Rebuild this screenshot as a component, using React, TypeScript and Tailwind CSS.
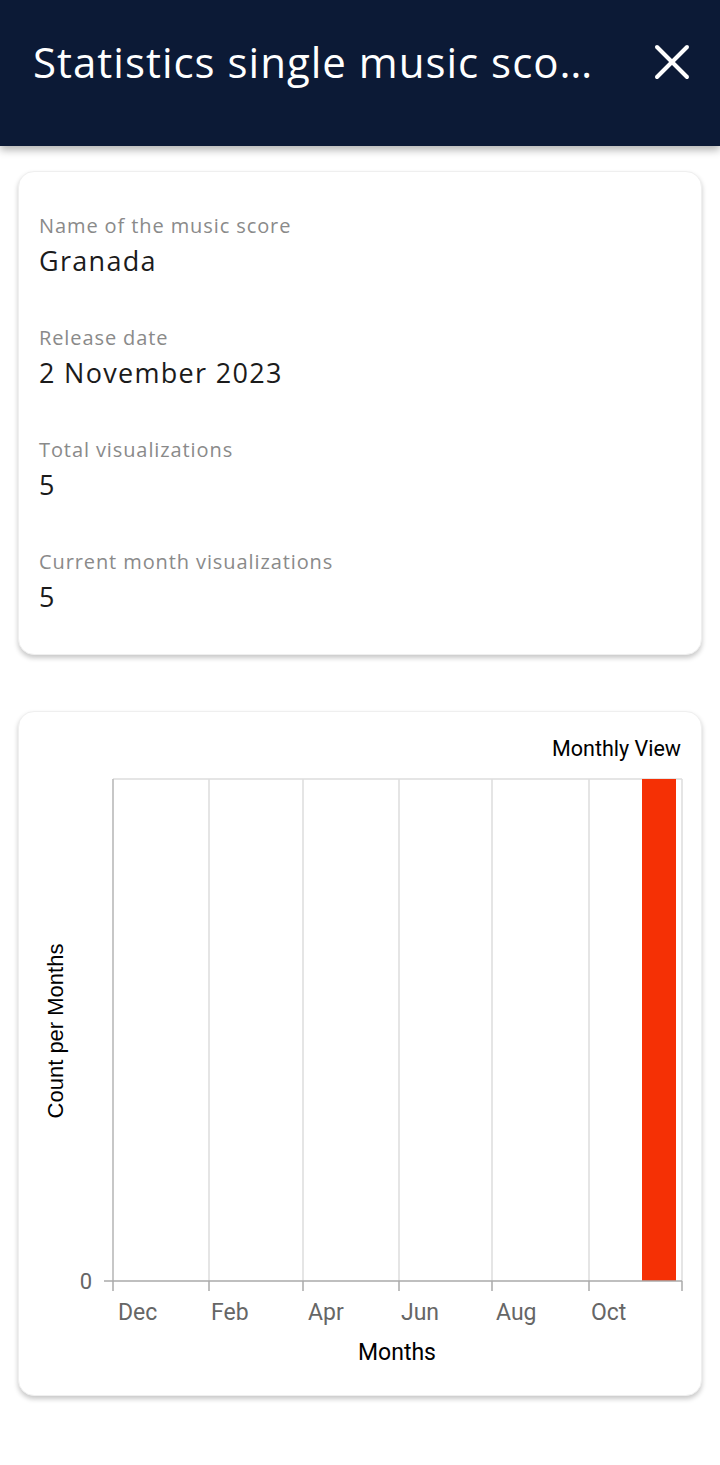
import { X } from "lucide-react";

const stats = [
  { label: "Name of the music score", value: "Granada" },
  { label: "Release date", value: "2 November 2023" },
  { label: "Total visualizations", value: "5" },
  { label: "Current month visualizations", value: "5" },
];

const grid = [94, 190, 284, 380, 473, 570, 663];
const months = [
  { name: "Dec", x: 99 },
  { name: "Feb", x: 192 },
  { name: "Apr", x: 289 },
  { name: "Jun", x: 382 },
  { name: "Aug", x: 477 },
  { name: "Oct", x: 572 },
];

function MonthlyChart() {
  return (
    <svg width="684" height="570" className="block" style={{ fontFamily: "Roboto, sans-serif" }}>
      {grid.map((x) => (
        <line key={x} x1={x} y1={18} x2={x} y2={520} stroke="#dcdcdc" strokeWidth="1.5" />
      ))}
      <line x1={94} y1={18} x2={663} y2={18} stroke="#dcdcdc" strokeWidth="1.5" />
      <line x1={94} y1={18} x2={94} y2={520} stroke="#bdbdbd" strokeWidth="1.5" />
      <rect x={623} y={18} width={34} height={502} fill="#f53005" />
      <line x1={85} y1={520} x2={663} y2={520} stroke="#aaaaaa" strokeWidth="1.5" />
      {grid.map((x) => (
        <line key={"t" + x} x1={x} y1={520} x2={x} y2={530} stroke="#aaaaaa" strokeWidth="1.5" />
      ))}
      <text x={73} y={528} fontSize="22" fill="#666" textAnchor="end">
        0
      </text>
      {months.map((m) => (
        <text key={m.name} x={m.x} y={559} fontSize="23" fill="#666">
          {m.name}
        </text>
      ))}
      <text
        x={36}
        y={270}
        fontSize="22"
        fill="#000"
        textAnchor="middle"
        dominantBaseline="central"
        transform="rotate(-90 36 270)"
        style={{ fontFamily: "'Liberation Sans', Arial, sans-serif" }}
      >
        Count per Months
      </text>
    </svg>
  );
}

export default function App() {
  return (
    <div className="min-h-screen w-[720px] bg-white font-['Open_Sans',sans-serif]">
      <div className="h-[146px] bg-[#0c1a36] pt-[33px] pl-[33px] pr-[18px] flex items-start justify-between shadow-[0_4px_8px_rgba(0,0,0,0.3)] relative">
        <h1 className="text-white text-[42px] leading-[58px] font-medium tracking-[1px] whitespace-nowrap">
          Statistics single music sco…
        </h1>
        <X className="text-white -mt-[1px]" size={60} strokeWidth={1.6} />
      </div>

      <div className="px-[18px] pt-[25px] flex flex-col gap-[56px]">
        <div className="rounded-[16px] bg-white border border-[#efefef] shadow-[0_3px_5px_rgba(0,0,0,0.22)] px-[20px] pt-[40px] pb-[39px] flex flex-col gap-[45px]">
          {stats.map((s) => (
            <div key={s.label} className="flex flex-col gap-[3px]">
              <span className="text-[20px] leading-[28px] tracking-[0.9px] text-[#8a8a8a]">{s.label}</span>
              <span className="text-[27px] leading-[36px] tracking-[1.3px] text-[#1b1b1b] font-medium">
                {s.value}
              </span>
            </div>
          ))}
        </div>

        <div className="rounded-[16px] bg-white border border-[#efefef] shadow-[0_3px_5px_rgba(0,0,0,0.22)] pt-[25px] pb-[27px] flex flex-col">
          <div className="text-right pr-[20px] text-[21.5px] leading-[24px] text-black font-['Roboto',sans-serif]">
            Monthly View
          </div>
          <MonthlyChart />
          <div className="text-center pl-[74px] mt-[7px] text-[23px] leading-[30px] text-black font-['Roboto',sans-serif]">
            Months
          </div>
        </div>
      </div>
    </div>
  );
}
